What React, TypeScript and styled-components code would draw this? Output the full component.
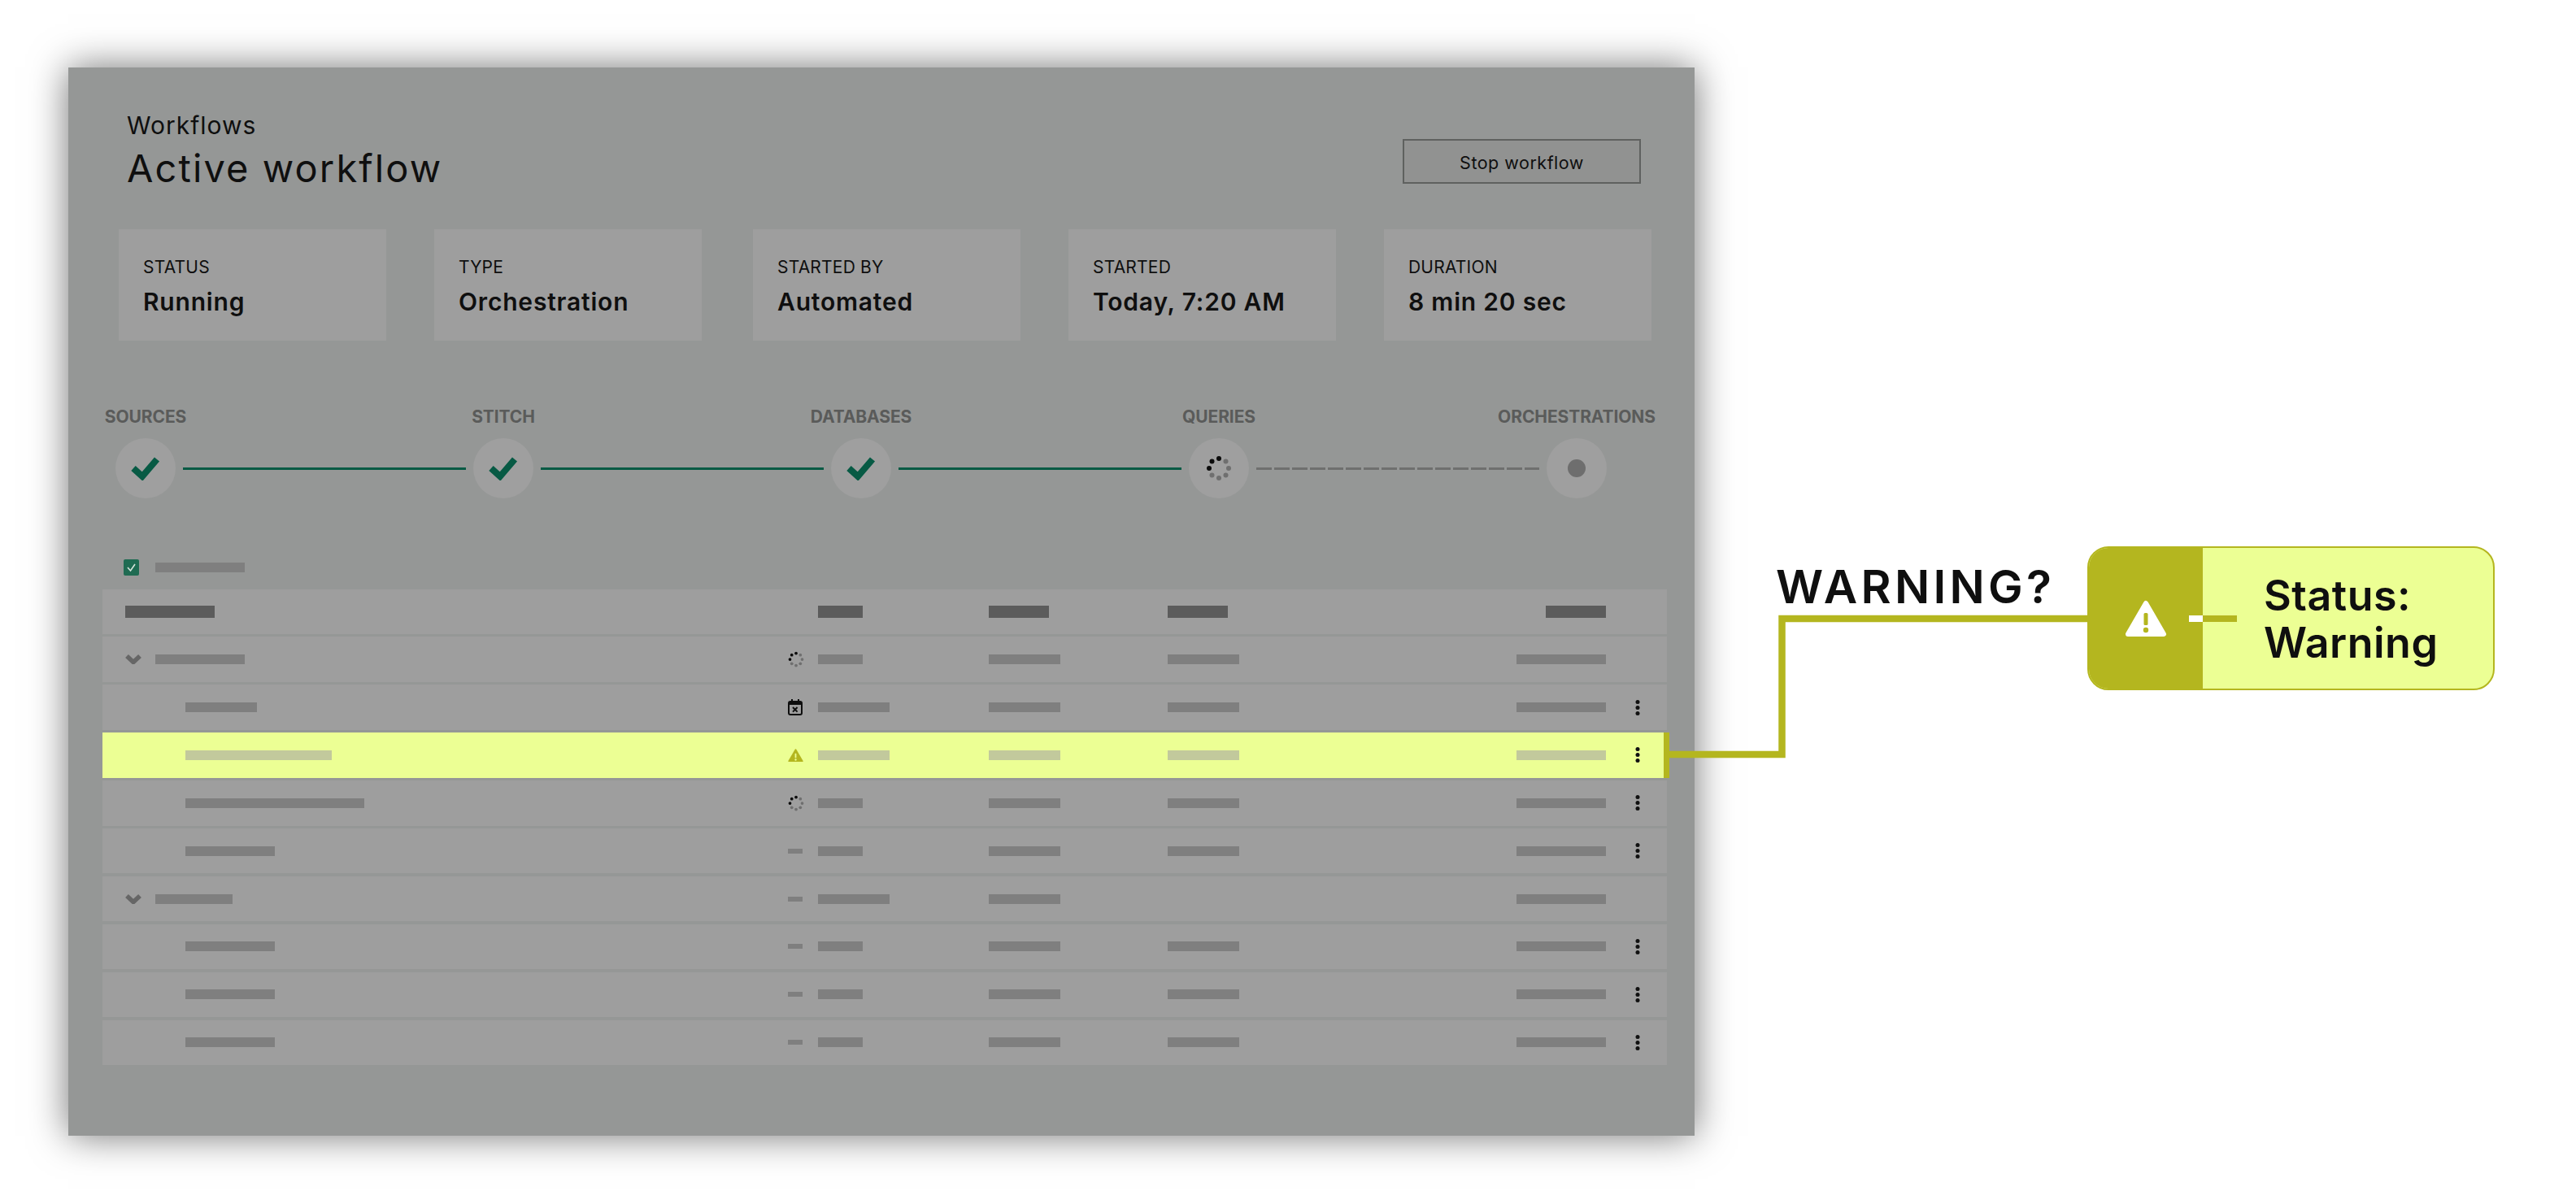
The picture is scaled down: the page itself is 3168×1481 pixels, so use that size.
import React from "react";
import styled, { createGlobalStyle } from "styled-components";

const GlobalStyle = createGlobalStyle`
  html, body {
    margin: 0;
    background: #fff;
  }
  body {
    font-family: Inter, "Liberation Sans", sans-serif;
    color: #0f0f0f;
  }
`;

const Page = styled.div`
  position: relative;
  display: flex;
  width: 3168px;
  height: 1481px;
  padding: 83px 0 0 84px;
  box-sizing: border-box;
  overflow: hidden;
`;

const Panel = styled.main`
  flex: none;
  width: 2000px;
  height: 1314px;
  background: #959796;
  box-shadow: 0 0 44px rgba(0, 0, 0, 0.55);
  padding-top: 53px;
  box-sizing: border-box;
`;

const Header = styled.header`
  display: flex;
  justify-content: space-between;
  align-items: flex-start;
  padding: 0 66px 0 72px;
`;

const Crumb = styled.div`
  font-size: 30px;
  line-height: 36px;
  letter-spacing: 1px;
`;

const Title = styled.h1`
  margin: 9px 0 0;
  font-size: 47px;
  line-height: 52px;
  font-weight: 400;
  letter-spacing: 2.1px;
`;

const StopButton = styled.button`
  width: 293px;
  height: 55px;
  margin-top: 35px;
  padding-top: 3px;
  background: #919291;
  border: 2px solid #5f615f;
  font: 400 21.5px Inter, sans-serif;
  letter-spacing: 0.5px;
  color: #0f0f0f;
`;

const Cards = styled.section`
  display: flex;
  gap: 59px;
  margin: 49px 0 0 62px;
`;

const Card = styled.div<{ $shift?: number }>`
  width: 329px;
  height: 137px;
  margin-left: ${(p) => p.$shift ?? 0}px;
  padding: 34px 0 0 30px;
  box-sizing: border-box;
  background: #9e9e9e;
`;

const CardLabel = styled.div`
  font-size: 21px;
  line-height: 26px;
  letter-spacing: 0.2px;
`;

const CardValue = styled.div`
  margin-top: 11px;
  font-size: 30px;
  line-height: 36px;
  font-weight: 600;
  letter-spacing: 0.8px;
`;

const Stepper = styled.section`
  display: flex;
  margin: 81px 0 0 58px;
`;

const Step = styled.div`
  display: flex;
  flex-direction: column;
  align-items: center;
  width: 74px;
`;

const StepLabel = styled.div`
  font-size: 21px;
  line-height: 26px;
  font-weight: 700;
  letter-spacing: -0.1px;
  color: #5a5b5a;
  white-space: nowrap;
`;

const StepCircle = styled.div`
  display: flex;
  align-items: center;
  justify-content: center;
  width: 74px;
  height: 74px;
  margin-top: 13px;
  border-radius: 50%;
  background: #9f9f9f;
`;

const Connector = styled.div<{ $pending?: boolean }>`
  align-self: flex-end;
  width: 348px;
  height: 3px;
  margin: 0 9px 35px;
  background: ${(p) =>
    p.$pending
      ? "repeating-linear-gradient(90deg, #6f706f 0 19px, transparent 19px 22px)"
      : "#075a44"};
`;

const PendingDot = styled.div`
  width: 22px;
  height: 22px;
  border-radius: 50%;
  background: #6e6e6e;
`;

const SelectRow = styled.div`
  display: flex;
  align-items: center;
  gap: 20px;
  height: 20px;
  margin: 75px 0 0 68px;
`;

const Checkbox = styled.div`
  display: flex;
  align-items: center;
  justify-content: center;
  width: 19px;
  height: 20px;
  border-radius: 2px;
  background: #1f6b52;
`;

const Table = styled.section`
  display: flex;
  flex-direction: column;
  gap: 3.4px;
  width: 1924px;
  margin: 16.5px 0 0 42px;
`;

const Row = styled.div<{ $warn?: boolean }>`
  position: relative;
  display: grid;
  grid-template-columns: 834px 46px 210px 220px 264px 275px 75px;
  align-items: center;
  height: 55.5px;
  background: ${(p) => (p.$warn ? "#ecff94" : "#9e9e9e")};

  ${(p) =>
    p.$warn &&
    `&::after {
      content: "";
      position: absolute;
      top: 0;
      bottom: 0;
      right: -3px;
      width: 7px;
      background: #b4b61f;
    }`}
`;

const NameCell = styled.div<{ $indent: number }>`
  display: flex;
  align-items: center;
  gap: 17px;
  padding-left: ${(p) => p.$indent}px;
`;

const StatusCell = styled.div`
  display: flex;
  align-items: center;
  padding-left: 9px;
`;

const EndCell = styled.div`
  display: flex;
  justify-content: flex-end;
`;

const MenuCell = styled.div`
  display: flex;
  padding-left: 36px;
`;

const Bar = styled.span<{ $w: number; $tone?: "head" | "warn" }>`
  display: block;
  width: ${(p) => p.$w}px;
  height: ${(p) => (p.$tone === "head" ? 15 : 12)}px;
  background: ${(p) =>
    p.$tone === "head" ? "#5c5c5c" : p.$tone === "warn" ? "#c2c99c" : "#7f7f7f"};
`;

const StatusDash = styled.span`
  display: block;
  width: 18px;
  height: 6px;
  background: #7f7f7f;
`;

const Annotation = styled.aside`
  display: flex;
  align-items: flex-start;
  margin: 589px 0 0 100px;
`;

const Question = styled.div`
  width: 383px;
  margin-top: 16px;
  font-size: 57px;
  line-height: 68px;
  font-weight: 600;
  letter-spacing: 4.3px;
`;

const Callout = styled.div`
  position: relative;
  display: flex;
  width: 501px;
  height: 177px;
  border-radius: 26px;
  overflow: hidden;
  box-sizing: border-box;
  border: 2px solid #b4b61f;
  background: #ecff94;
`;

const CalloutIcon = styled.div`
  display: flex;
  align-items: center;
  justify-content: center;
  width: 140px;
  background: #b4b61f;
`;

const CalloutText = styled.div`
  padding: 30px 0 0 75px;
  font-size: 52px;
  line-height: 58px;
  font-weight: 600;
  letter-spacing: 0.5px;
`;

const CalloutTick = styled.span<{ $left: number; $w: number; $color: string }>`
  position: absolute;
  top: 83px;
  left: ${(p) => p.$left}px;
  width: ${(p) => p.$w}px;
  height: 8px;
  background: ${(p) => p.$color};
`;

const Leader = styled.svg`
  position: absolute;
  left: 2050px;
  top: 750px;
`;

const SpinnerIcon = ({ size }: { size: number }) => (
  <svg width={size} height={size} viewBox="0 0 32 32">
    {[0, 1, 2, 3, 4, 5, 6, 7].map((i) => {
      const a = (i * Math.PI) / 4;
      return (
        <circle
          key={i}
          cx={16 + 12 * Math.sin(a)}
          cy={16 - 12 * Math.cos(a)}
          r="3"
          fill={i === 0 || i >= 6 ? "#0c0c0c" : "#6f6f6f"}
        />
      );
    })}
  </svg>
);

const CheckIcon = () => (
  <svg width="38" height="30" viewBox="0 0 38 30">
    <polyline points="4,15 15,25 33,4" fill="none" stroke="#075a44" strokeWidth="8" />
  </svg>
);

const CalendarIcon = () => (
  <svg width="18" height="20" viewBox="0 0 18 20">
    <rect x="1" y="3" width="16" height="16" rx="2" fill="none" stroke="#0f0f0f" strokeWidth="2" />
    <rect x="1" y="3" width="16" height="4" fill="#0f0f0f" />
    <rect x="4" y="0" width="2" height="4" fill="#0f0f0f" />
    <rect x="12" y="0" width="2" height="4" fill="#0f0f0f" />
    <path d="M6 10l5.6 5.6M11.6 10l-5.6 5.6" stroke="#0f0f0f" strokeWidth="2" />
  </svg>
);

const WarningIcon = ({ size, fill, mark }: { size: number; fill: string; mark: string }) => (
  <svg width={size} height={(size * 46) / 52} viewBox="0 0 52 46">
    <path d="M26 4 L48 42 H4 Z" fill={fill} stroke={fill} strokeWidth="6" strokeLinejoin="round" />
    <rect x="23.5" y="16" width="5" height="15" rx="1.5" fill={mark} />
    <circle cx="26" cy="37" r="3.2" fill={mark} />
  </svg>
);

const ChevronIcon = () => (
  <svg width="20" height="12" viewBox="0 0 20 12">
    <polyline points="2,2 10,9.5 18,2" fill="none" stroke="#666" strokeWidth="5.5" />
  </svg>
);

const KebabIcon = () => (
  <svg width="6" height="19" viewBox="0 0 6 19">
    <circle cx="3" cy="2.5" r="2.5" fill="#111" />
    <circle cx="3" cy="9.5" r="2.5" fill="#111" />
    <circle cx="3" cy="16.5" r="2.5" fill="#111" />
  </svg>
);

const TinyCheck = () => (
  <svg width="13" height="12" viewBox="0 0 13 12">
    <polyline points="2,6 5.5,10 11,2" fill="none" stroke="#d6e4dc" strokeWidth="1.6" />
  </svg>
);

const summary = [
  { label: "STATUS", value: "Running" },
  { label: "TYPE", value: "Orchestration" },
  { label: "STARTED BY", value: "Automated", shift: 4 },
  { label: "STARTED", value: "Today, 7:20 AM" },
  { label: "DURATION", value: "8 min 20 sec" },
];

type StepState = "done" | "running" | "pending";

const steps: { label: string; state: StepState }[] = [
  { label: "SOURCES", state: "done" },
  { label: "STITCH", state: "done" },
  { label: "DATABASES", state: "done" },
  { label: "QUERIES", state: "running" },
  { label: "ORCHESTRATIONS", state: "pending" },
];

type Status = "running" | "calendar" | "warning" | "none";

interface IRow {
  group?: boolean;
  name: number;
  status: Status;
  started: number;
  noType?: boolean;
  warn?: boolean;
}

const rows: IRow[] = [
  { group: true, name: 110, status: "running", started: 55 },
  { name: 88, status: "calendar", started: 88 },
  { name: 180, status: "warning", started: 88, warn: true },
  { name: 220, status: "running", started: 55 },
  { name: 110, status: "none", started: 55 },
  { group: true, name: 95, status: "none", started: 88, noType: true },
  { name: 110, status: "none", started: 55 },
  { name: 110, status: "none", started: 55 },
  { name: 110, status: "none", started: 55 },
];

function StatusIcon({ status }: { status: Status }) {
  if (status === "running") return <SpinnerIcon size={20} />;
  if (status === "calendar") return <CalendarIcon />;
  if (status === "warning") return <WarningIcon size={19} fill="#b4b61f" mark="#ecff94" />;
  return <StatusDash />;
}

export default function App() {
  return (
    <Page>
      <GlobalStyle />
      <Panel>
        <Header>
          <div>
            <Crumb>Workflows</Crumb>
            <Title>Active workflow</Title>
          </div>
          <StopButton>Stop workflow</StopButton>
        </Header>

        <Cards>
          {summary.map((c) => (
            <Card key={c.label} $shift={c.shift}>
              <CardLabel>{c.label}</CardLabel>
              <CardValue>{c.value}</CardValue>
            </Card>
          ))}
        </Cards>

        <Stepper>
          {steps.map((s, i) => (
            <React.Fragment key={s.label}>
              <Step>
                <StepLabel>{s.label}</StepLabel>
                <StepCircle>
                  {s.state === "done" && <CheckIcon />}
                  {s.state === "running" && <SpinnerIcon size={32} />}
                  {s.state === "pending" && <PendingDot />}
                </StepCircle>
              </Step>
              {i < steps.length - 1 && <Connector $pending={s.state !== "done"} />}
            </React.Fragment>
          ))}
        </Stepper>

        <SelectRow>
          <Checkbox>
            <TinyCheck />
          </Checkbox>
          <Bar $w={110} />
        </SelectRow>

        <Table>
          <Row>
            <NameCell $indent={28}>
              <Bar $w={110} $tone="head" />
            </NameCell>
            <div />
            <Bar $w={55} $tone="head" />
            <Bar $w={74} $tone="head" />
            <Bar $w={74} $tone="head" />
            <EndCell>
              <Bar $w={74} $tone="head" />
            </EndCell>
            <div />
          </Row>
          {rows.map((r, i) => {
            const tone = r.warn ? "warn" : undefined;
            return (
              <Row key={i} $warn={r.warn}>
                <NameCell $indent={r.group ? 28 : 102}>
                  {r.group && <ChevronIcon />}
                  <Bar $w={r.name} $tone={tone} />
                </NameCell>
                <StatusCell>
                  <StatusIcon status={r.status} />
                </StatusCell>
                <Bar $w={r.started} $tone={tone} />
                <Bar $w={88} $tone={tone} />
                {r.noType ? <div /> : <Bar $w={88} $tone={tone} />}
                <EndCell>
                  <Bar $w={110} $tone={tone} />
                </EndCell>
                <MenuCell>{!r.group && <KebabIcon />}</MenuCell>
              </Row>
            );
          })}
        </Table>
      </Panel>

      <Annotation>
        <Question>WARNING?</Question>
        <Callout>
          <CalloutIcon>
            <WarningIcon size={52} fill="#fff" mark="#b4b61f" />
          </CalloutIcon>
          <CalloutText>
            Status:
            <br />
            Warning
          </CalloutText>
          <CalloutTick $left={123} $w={17} $color="#fff" />
          <CalloutTick $left={140} $w={42} $color="#b4b61f" />
        </Callout>
      </Annotation>

      <Leader width="520" height="190" viewBox="0 0 520 190" fill="none">
        <path d="M3 178 H141.5 V11 H517" stroke="#b4b61f" strokeWidth="8.5" />
      </Leader>
    </Page>
  );
}
